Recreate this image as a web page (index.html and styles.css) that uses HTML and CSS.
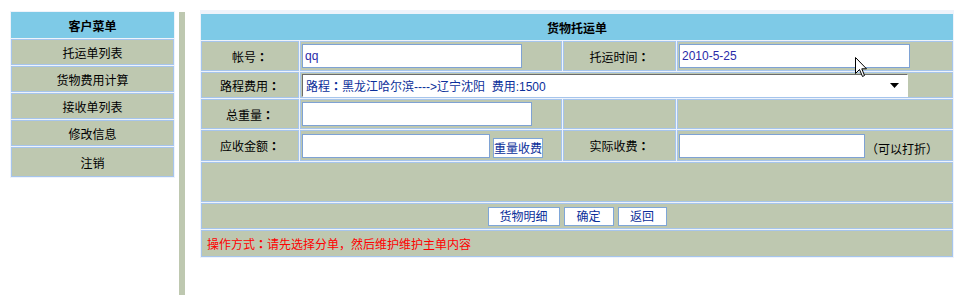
FILE: index.html
```html
<!DOCTYPE html>
<html lang="zh-CN">
<head>
    <meta charset="UTF-8">
    <title>货物托运单</title>
    <link rel="stylesheet" href="styles.css">
</head>
<body>
    <div class="page">
        <!-- 左侧菜单 -->
        <table class="menu">
            <tr class="menu-head"><th>客户菜单</th></tr>
            <tr><td>托运单列表</td></tr>
            <tr><td>货物费用计算</td></tr>
            <tr><td>接收单列表</td></tr>
            <tr><td>修改信息</td></tr>
            <tr class="menu-last"><td>注销</td></tr>
        </table>

        <div class="divider"></div>

        <!-- 托运单表单 -->
        <div class="main">
            <table class="form">
                <colgroup>
                    <col class="c1"><col class="c2"><col class="c3"><col class="c4">
                </colgroup>
                <tr class="row-head"><th colspan="4">货物托运单</th></tr>
                <tr class="row-30">
                    <td class="label">帐号<span class="colon" lang="ja">：</span></td>
                    <td class="field"><input class="txt w220" type="text" value="qq"></td>
                    <td class="label">托运时间<span class="colon" lang="ja">：</span></td>
                    <td class="field"><input class="txt w231" type="text" value="2010-5-25"></td>
                </tr>
                <tr class="row-26">
                    <td class="label">路程费用<span class="colon" lang="ja">：</span></td>
                    <td class="field" colspan="3">
                        <div class="select">
                            <span>路程<span class="colon" lang="ja">：</span>黑龙江哈尔滨----&gt;辽宁沈阳&nbsp;&nbsp;费用:1500</span>
                            <svg class="arrow" width="9" height="5" viewBox="0 0 9 5"><path d="M0 0H9L4.5 5Z" fill="#000"/></svg>
                        </div>
                    </td>
                </tr>
                <tr class="row-30">
                    <td class="label">总重量<span class="colon" lang="ja">：</span></td>
                    <td class="field"><input class="txt w230" type="text" value=""></td>
                    <td></td>
                    <td></td>
                </tr>
                <tr class="row-31">
                    <td class="label">应收金额<span class="colon" lang="ja">：</span></td>
                    <td class="field bottom"><input class="txt w188" type="text" value=""><button class="btn small">重量收费</button></td>
                    <td class="label">实际收费<span class="colon" lang="ja">：</span></td>
                    <td class="field bottom"><input class="txt w186" type="text" value=""><span class="note">（可以打折）</span></td>
                </tr>
                <tr class="row-40"><td colspan="4"></td></tr>
                <tr class="row-26">
                    <td colspan="4" class="actions">
                        <button class="btn w72">货物明细</button>
                        <button class="btn w50">确定</button>
                        <button class="btn w49">返回</button>
                    </td>
                </tr>
                <tr class="row-27">
                    <td colspan="4" class="tip">操作方式<span class="colon" lang="ja">：</span>请先选择分单，然后维护维护主单内容</td>
                </tr>
            </table>
        </div>
    </div>

    <!-- 鼠标指针 -->
    <svg class="cursor" width="13" height="21" viewBox="0 0 13 21">
        <path d="M0.5 0.5V16.5L4.5 12.5L7.5 19.5L9.5 18.5L6.8 11.8H11.5Z" fill="#fff" stroke="#000" stroke-width="1"/>
    </svg>
</body>
</html>
```

FILE: styles.css
```css
body {
    margin: 0;
    padding: 0;
    background-color: #ffffff;
    font-family: "Liberation Sans", "Noto Sans CJK SC", sans-serif;
    font-size: 12px;
    color: #000;
}
.page {
    display: flex;
    align-items: flex-start;
    padding: 10px 0 0 10px;
    min-height: 295px;
    box-sizing: border-box;
}

/* 左侧菜单 */
.menu {
    width: 165px;
    margin-top: 1px;
    border-collapse: separate;
    border-spacing: 1px;
    background: #eef3fb;
}
.menu th, .menu td {
    height: 26px;
    padding: 0;
    border: 1px solid #a6c5ec;
    box-sizing: border-box;
    text-align: center;
    font-family: "Noto Sans CJK SC", sans-serif;
    font-size: 12px;
    background: #bec8b0;
}
.menu th {
    background: #7ecae7;
    border-color: #7ecae7;
    font-weight: bold;
}
.menu .menu-last td {
    height: 30px;
}

.divider {
    align-self: stretch;
    width: 6px;
    margin: 2px 0 0 4px;
    background: #bec8b0;
}

/* 表单 */
.main {
    margin-left: 15px;
}
.form {
    width: 754px;
    table-layout: fixed;
    border-collapse: separate;
    border-spacing: 1px;
    padding-top: 3px;
    background: #eef3fb;
}
.form .c1 { width: 98px; }
.form .c2 { width: 262px; }
.form .c3 { width: 113px; }
.form .c4 { width: 276px; }
.form th, .form td {
    padding: 0;
    border: 1px solid #a6c5ec;
    background: #bec8b0;
    vertical-align: middle;
}
.form th {
    background: #7ecae7;
    border-color: #7ecae7;
    font-family: "Noto Sans CJK SC", sans-serif;
    font-size: 12px;
    font-weight: bold;
    text-align: center;
}
.row-head { height: 26px; }
.row-26 { height: 26px; }
.row-27 { height: 27px; }
.row-30 { height: 30px; }
.row-31 { height: 31px; }
.row-40 { height: 40px; }

.label {
    text-align: center;
    font-family: "Noto Sans CJK SC", sans-serif;
}
/* 日文字形的全角冒号居中，更接近原图 */
.colon {
    font-family: "Noto Sans CJK JP", sans-serif;
    font-weight: bold;
}
.field {
    padding-left: 1px !important;
    white-space: nowrap;
}
.field.bottom {
    vertical-align: bottom !important;
    padding-bottom: 2px !important;
}

.txt {
    height: 24px;
    box-sizing: border-box;
    margin: 0;
    padding: 0 2px;
    border: 1px solid #7ea2d4;
    background: #fff;
    color: #2a2aa8;
    font-family: "Liberation Sans", "Noto Sans CJK SC", sans-serif;
    font-size: 12px;
    vertical-align: bottom;
}
.w220 { width: 220px; }
.w231 { width: 231px; }
.w230 { width: 230px; }
.w188 { width: 188px; }
.w186 { width: 186px; }

.select {
    display: flex;
    align-items: center;
    justify-content: space-between;
    width: 606px;
    height: 23px;
    box-sizing: border-box;
    padding: 0 8px 0 3px;
    background: #fff;
    border: 1px solid #ffffff;
    border-top-color: #6c6c6c;
    border-left-color: #6c6c6c;
    color: #0b2f9a;
    font-size: 12px;
}
.select span {
    font-family: "Liberation Sans", "Noto Sans CJK SC", sans-serif;
}

.btn {
    height: 19px;
    box-sizing: border-box;
    margin: 0;
    padding: 0;
    background: #fff;
    border: 1px solid #7ea6d8;
    color: #0b2f9a;
    font-family: "Noto Sans CJK SC", sans-serif;
    font-size: 12px;
    line-height: 16px;
    cursor: pointer;
    vertical-align: middle;
}
.btn.small {
    width: 50px;
    height: 20px;
    margin-left: 3px;
    vertical-align: bottom;
}
.w72 { width: 72px; }
.w50 { width: 50px; }
.w49 { width: 49px; }

.actions {
    text-align: center;
    font-size: 0;
}
.actions .btn {
    margin: 0 2px;
}

.note {
    margin-left: 1px;
    font-family: "Noto Sans CJK SC", sans-serif;
    font-size: 12px;
    line-height: 18px;
}

.tip {
    padding-left: 5px !important;
    color: #ff0000;
    font-family: "Noto Sans CJK SC", sans-serif;
}

.cursor {
    position: absolute;
    left: 855px;
    top: 57px;
}
```
